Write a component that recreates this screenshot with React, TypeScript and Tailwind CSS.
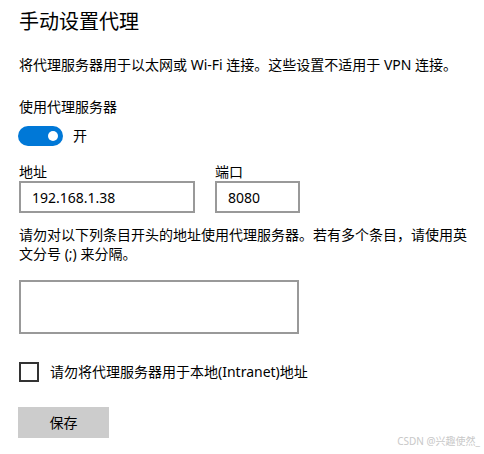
import { useState } from "react";

export default function App() {
  const [on, setOn] = useState(true);
  const [skipLocal, setSkipLocal] = useState(false);

  return (
    <div className="relative h-[454px] w-[484px] overflow-hidden bg-white pl-[19px] pt-[8px] text-black [font-family:'Noto_Sans','Noto_Sans_CJK_SC',sans-serif]">
      <h1 className="text-[20px] leading-[28px] font-normal">手动设置代理</h1>

      <p className="mt-[19px] text-[14px] leading-[20px] whitespace-nowrap">
        将代理服务器用于以太网或 Wi-Fi 连接。这些设置不适用于 VPN 连接。
      </p>

      <p className="mt-[22px] text-[14px] leading-[20px]">使用代理服务器</p>

      <div className="mt-[9px] flex h-[20px] items-center gap-[10px]">
        <button
          onClick={() => setOn(!on)}
          className={`relative ml-[-1px] h-[20px] w-[45px] rounded-full ${
            on ? "bg-[#0078d7]" : "border-2 border-[#333] bg-white"
          }`}
        >
          <span
            className={`absolute top-[5px] h-[10px] w-[10px] rounded-full ${
              on ? "right-[5px] bg-white" : "left-[3px] top-[3px] bg-[#333]"
            }`}
          />
        </button>
        <span className="text-[14px] leading-[20px]">{on ? "开" : "关"}</span>
      </div>

      <div className="mt-[17px] flex gap-[20px]">
        <div>
          <label className="block text-[14px] leading-[18px]">地址</label>
          <input
            defaultValue="192.168.1.38"
            className="block h-[32px] w-[176px] border-2 border-[#999] px-[11px] text-[14px] outline-none"
          />
        </div>
        <div>
          <label className="block text-[14px] leading-[18px]">端口</label>
          <input
            defaultValue="8080"
            className="block h-[32px] w-[85px] border-2 border-[#999] px-[11px] text-[14px] outline-none"
          />
        </div>
      </div>

      <p className="mt-[12px] text-[14px] leading-[19px]">
        请勿对以下列条目开头的地址使用代理服务器。若有多个条目，请使用英
        <br />
        文分号 (;) 来分隔。
      </p>

      <textarea className="mt-[17px] block h-[54px] w-[280px] resize-none border-2 border-[#999] outline-none" />

      <label className="mt-[28px] flex items-center gap-[11px]">
        <input
          type="checkbox"
          checked={skipLocal}
          onChange={() => setSkipLocal(!skipLocal)}
          className="h-[20px] w-[20px] appearance-none border-2 border-[#333] bg-white"
        />
        <span className="text-[14px] leading-[20px]">请勿将代理服务器用于本地(Intranet)地址</span>
      </label>

      <button className="mt-[25px] ml-[-1px] block h-[31px] w-[91px] bg-[#cccccc] text-[14px]">
        保存
      </button>

      <span className="absolute right-[4px] top-[434px] text-[10px] leading-[14px] text-[#c8c8c8]">
        CSDN @兴趣使然_
      </span>
    </div>
  );
}
